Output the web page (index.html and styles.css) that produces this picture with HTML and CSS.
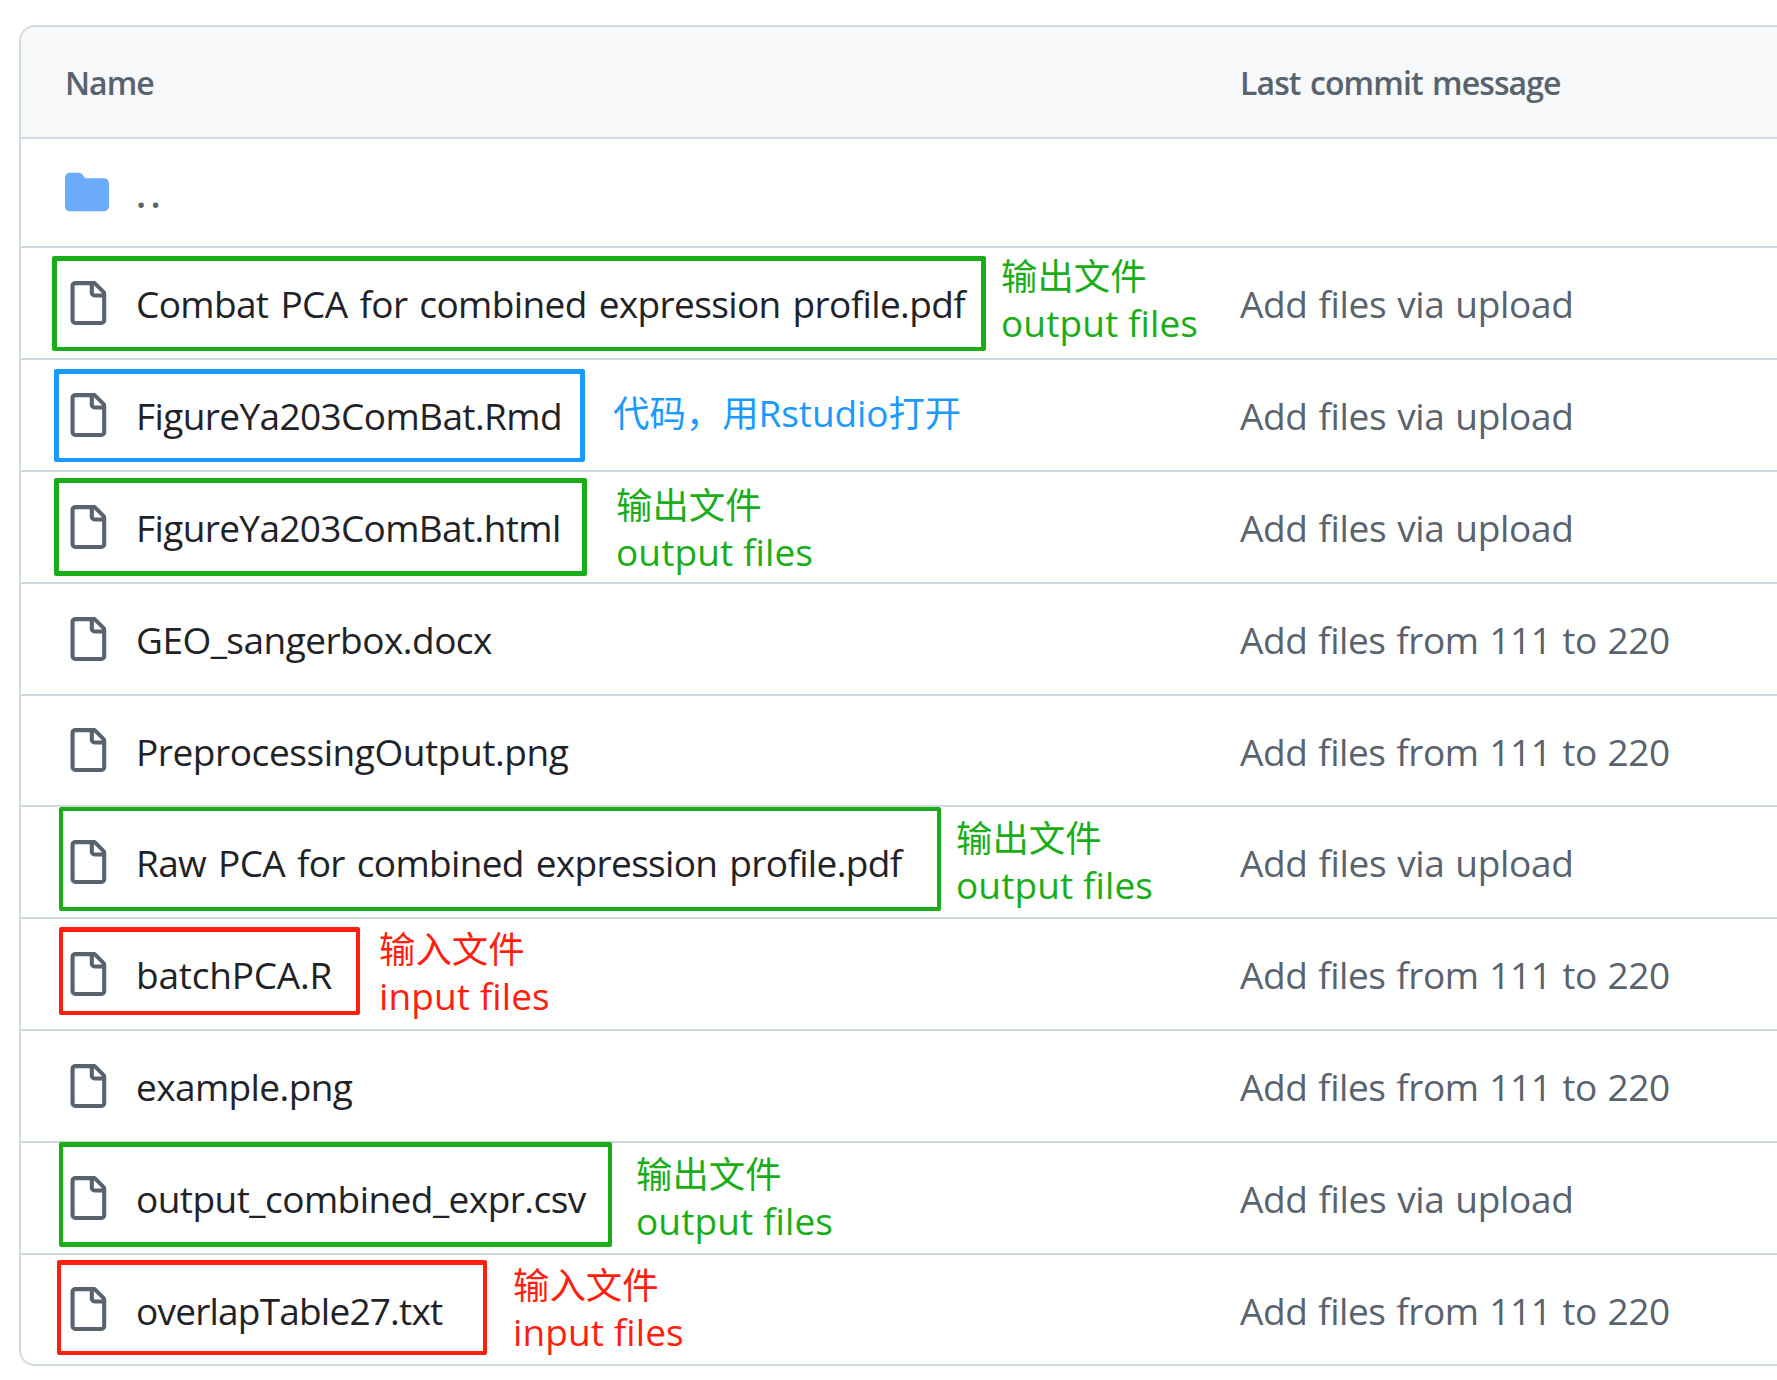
FILE: index.html
```html
<!DOCTYPE html>
<html lang="en">
<head>
<meta charset="utf-8">
<title>Files</title>
<link rel="stylesheet" href="styles.css">
</head>
<body>
<svg class="defs" aria-hidden="true">
  <symbol id="file" viewBox="0 0 16 16"><path d="M2 1.75C2 .784 2.784 0 3.75 0h6.586c.464 0 .909.184 1.237.513l2.914 2.914c.329.328.513.773.513 1.237v9.586A1.75 1.75 0 0 1 13.25 16h-9.5A1.75 1.75 0 0 1 2 14.25Zm1.75-.25a.25.25 0 0 0-.25.25v12.5c0 .138.112.25.25.25h9.5a.25.25 0 0 0 .25-.25V6h-2.75A1.75 1.75 0 0 1 9 4.25V1.5Zm6.75.062V4.25c0 .138.112.25.25.25h2.688l-.011-.013-2.914-2.914-.013-.011Z"/></symbol>
  <symbol id="folder" viewBox="0 0 16 16"><path d="M1.75 1A1.75 1.75 0 0 0 0 2.75v10.5C0 14.216.784 15 1.75 15h12.5A1.75 1.75 0 0 0 16 13.25v-8.5A1.75 1.75 0 0 0 14.25 3H7.5a.25.25 0 0 1-.2-.1l-.9-1.2C6.07 1.26 5.55 1 5 1H1.75Z"/></symbol>
</svg>
<main class="listing">
  <div class="row head"><div class="name">Name</div><div class="commit">Last commit message</div></div>
  <div class="row parent"><div class="name"><svg class="icon folder"><use href="#folder"/></svg><span class="dots">..</span></div></div>
  <div class="row combat"><div class="name"><svg class="icon"><use href="#file"/></svg><span class="label">Combat PCA for combined expression profile.pdf</span></div><div class="commit">Add files via upload</div>
    <div class="box green"></div><div class="note green"><span class="zh">输出文件</span><br>output files</div></div>
  <div class="row rmd"><div class="name"><svg class="icon"><use href="#file"/></svg><span class="label">FigureYa203ComBat.Rmd</span></div><div class="commit">Add files via upload</div>
    <div class="box blue"></div><div class="note blue"><span class="zh">代码，用</span>Rstudio<span class="zh">打开</span></div></div>
  <div class="row html"><div class="name"><svg class="icon"><use href="#file"/></svg><span class="label">FigureYa203ComBat.html</span></div><div class="commit">Add files via upload</div>
    <div class="box green"></div><div class="note green"><span class="zh">输出文件</span><br>output files</div></div>
  <div class="row geo"><div class="name"><svg class="icon"><use href="#file"/></svg><span class="label">GEO_sangerbox.docx</span></div><div class="commit range">Add files from 111 to 220</div></div>
  <div class="row short prep"><div class="name"><svg class="icon"><use href="#file"/></svg><span class="label">PreprocessingOutput.png</span></div><div class="commit range">Add files from 111 to 220</div></div>
  <div class="row raw"><div class="name"><svg class="icon"><use href="#file"/></svg><span class="label">Raw PCA for combined expression profile.pdf</span></div><div class="commit">Add files via upload</div>
    <div class="box green"></div><div class="note green"><span class="zh">输出文件</span><br>output files</div></div>
  <div class="row batch"><div class="name"><svg class="icon"><use href="#file"/></svg><span class="label">batchPCA.R</span></div><div class="commit range">Add files from 111 to 220</div>
    <div class="box red"></div><div class="note red"><span class="zh">输入文件</span><br>input files</div></div>
  <div class="row example"><div class="name"><svg class="icon"><use href="#file"/></svg><span class="label">example.png</span></div><div class="commit range">Add files from 111 to 220</div></div>
  <div class="row csv"><div class="name"><svg class="icon"><use href="#file"/></svg><span class="label">output_combined_expr.csv</span></div><div class="commit">Add files via upload</div>
    <div class="box green"></div><div class="note green"><span class="zh">输出文件</span><br>output files</div></div>
  <div class="row short overlap"><div class="name"><svg class="icon"><use href="#file"/></svg><span class="label">overlapTable27.txt</span></div><div class="commit range">Add files from 111 to 220</div>
    <div class="box red"></div><div class="note red"><span class="zh">输入文件</span><br>input files</div></div>
</main>
</body>
</html>
```
FILE: styles.css
```css
* { box-sizing: border-box; }
body {
  margin: 0;
  padding: 25px 0 0 19px;
  background: #fff;
  overflow: hidden;
  font: 37px/48px "Open Sans", "Noto Sans CJK SC", sans-serif;
  color: #1f2328;
  font-variant-ligatures: none;
}
.defs { display: none; }

.listing {
  border: 2px solid #d1d9e0;
  border-right: 0;
  border-radius: 16px 0 0 16px;
}
.row {
  position: relative;
  display: grid;
  grid-template-columns: 1219px 1fr;
  height: 112px;
  border-bottom: 2px solid #d1d9e0;
  white-space: nowrap;
}
.row.short { height: 111px; }
.row:last-child { border-bottom: 0; height: 109px; }
.row.parent { height: 109px; }
.row.head {
  background: #f6f8fa;
  border-radius: 14px 0 0 0;
  font-size: 32px;
  font-weight: 600;
  color: #59636e;
}
.name {
  display: flex;
  align-items: flex-start;
  padding: 33px 0 0 44px;
}
.commit { padding-top: 32px; color: #59636e; letter-spacing: -0.33px; word-spacing: 1.5px; }
.commit.range { letter-spacing: -0.42px; }
.head .name { padding-top: 32px; letter-spacing: -1px; }
.head .commit { letter-spacing: -0.9px; word-spacing: 2px; }
.icon { width: 44px; height: 44px; flex: none; fill: #59636e; margin-right: 27px; }
.short .icon { margin-top: -1px; }
.icon.folder { fill: #6cabfa; margin-top: -2px; }
.dots { color: #59636e; font-weight: 600; letter-spacing: 4.4px; margin-top: -2px; }
.label { margin-top: -1px; letter-spacing: -0.55px; }
.combat .label { word-spacing: 3px; letter-spacing: -0.63px; }
.rmd .label { letter-spacing: -0.61px; }
.html .label { letter-spacing: -0.63px; }
.geo .label { letter-spacing: -0.52px; }
.prep .label { letter-spacing: -0.43px; }
.raw .label { word-spacing: 3px; letter-spacing: -0.66px; }
.batch .label { letter-spacing: -0.22px; }
.example .label { letter-spacing: -0.6px; }
.overlap .label { letter-spacing: -0.79px; }

/* annotations drawn over the listing */
.box { position: absolute; border: 5px solid; border-radius: 2px; }
.note { position: absolute; line-height: 47px; letter-spacing: 0.1px; }
.zh { font-size: 36.4px; letter-spacing: 0; font-family: "Noto Sans CJK SC", sans-serif; line-height: 1; }
.green { color: #1aad19; }
.blue { color: #1a9aff; }
.red { color: #ff1e10; }

.combat .box { left: 31px; top: 8px; width: 934px; height: 95px; border-bottom-width: 4px; }
.combat .note { left: 980px; top: 4px; }
.rmd .box { left: 33px; top: 9px; width: 531px; height: 93px; border-bottom-width: 4px; }
.rmd .note { left: 592px; top: 29px; letter-spacing: -0.1px; }
.html .box { left: 33px; top: 6px; width: 533px; height: 98px; }
.html .note { left: 595px; top: 9px; }
.raw .box { left: 38px; top: 0; width: 882px; height: 104px; border-width: 4px; }
.raw .note { left: 935px; top: 7px; }
.batch .box { left: 38px; top: 8px; width: 301px; height: 88px; border-width: 5px 4px 4px; }
.batch .note { left: 358px; top: 6px; }
.csv .box { left: 38px; top: -1px; width: 553px; height: 105px; border-width: 5px 4px; }
.csv .note { left: 615px; top: 7px; }
.overlap .box { left: 36px; top: 5px; width: 430px; height: 95px; border-width: 5px 4px 4px; }
.overlap .note { left: 492px; top: 6px; }
```
